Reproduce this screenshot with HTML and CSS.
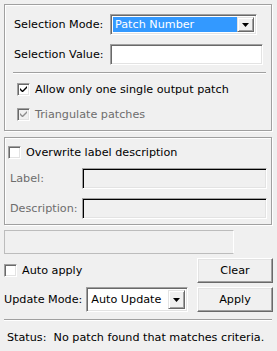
FILE: index.html
```html
<!DOCTYPE html>
<html lang="en">
<head>
    <meta charset="UTF-8">
    <title>Patch selection</title>
    <link rel="stylesheet" href="styles.css">
</head>
<body>

<div class="panel">
    <div class="group group-select">
        <div class="field-row">
            <span class="field-label">Selection Mode:</span>
            <div class="combo combo-mode">
                <span class="combo-text highlighted">Patch Number</span>
                <span class="combo-btn"><svg width="7" height="4" viewBox="0 0 7 4"><path d="M0 0H7L3.5 4Z" fill="#000"/></svg></span>
            </div>
        </div>
        <div class="field-row">
            <span class="field-label">Selection Value:</span>
            <div class="edit edit-value"></div>
        </div>
        <div class="sep sep-inner"></div>
        <div class="check-row row-single">
            <span class="check checked"><svg width="7" height="7" viewBox="0 0 7 7"><path d="M0 2V4L2 6H3L7 2V0L2.5 4.5Z" fill="#000"/></svg></span>
            <span>Allow only one single output patch</span>
        </div>
        <div class="check-row row-triangulate disabled">
            <span class="check checked"><svg width="7" height="7" viewBox="0 0 7 7"><path d="M0 2V4L2 6H3L7 2V0L2.5 4.5Z" fill="#8d8d8d"/></svg></span>
            <span>Triangulate patches</span>
        </div>
    </div>

    <div class="group group-label">
        <div class="check-row row-overwrite">
            <span class="check"></span>
            <span>Overwrite label description</span>
        </div>
        <div class="field-row row-label disabled">
            <span class="field-label short">Label:</span>
            <div class="edit edit-off"></div>
        </div>
        <div class="field-row row-desc disabled">
            <span class="field-label short">Description:</span>
            <div class="edit edit-off"></div>
        </div>
    </div>

    <div class="progress"></div>

    <div class="action-row row-auto">
        <div class="check-row">
            <span class="check"></span>
            <span>Auto apply</span>
        </div>
        <div class="button">Clear</div>
    </div>
    <div class="action-row row-update">
        <div class="update-field">
            <span>Update Mode:</span>
            <div class="combo combo-update">
                <span class="combo-text">Auto Update</span>
                <span class="combo-btn"><svg width="7" height="4" viewBox="0 0 7 4"><path d="M0 0H7L3.5 4Z" fill="#000"/></svg></span>
            </div>
        </div>
        <div class="button">Apply</div>
    </div>

    <div class="sep sep-status"></div>
    <div class="status">Status:&nbsp; No patch found that matches criteria.</div>
</div>

</body>
</html>
```
FILE: styles.css
```css
body {
    margin: 0;
    padding: 4px;
    background: #f0f0f0;
    font-family: "DejaVu Sans", sans-serif;
    font-size: 11.2px;
    color: #000;
}
.panel {
    width: 268px;
    display: flex;
    flex-direction: column;
}
.group {
    border: 1px solid #a0a0a0;
    box-shadow: inset 1px 1px 0 #fff, 1px 1px 0 #fff;
    display: flex;
    flex-direction: column;
}
.group-select {
    height: 127px;
    box-sizing: border-box;
    padding: 9px 0 0 9px;
}
.group-label {
    margin-top: 6px;
    height: 88px;
    box-sizing: border-box;
    padding: 8px 0 0 5px;
}
.field-row {
    display: flex;
    align-items: center;
}
.field-label {
    width: 96px;
}
.field-label.short {
    width: 72px;
}
.group-select .field-row + .field-row {
    margin-top: 9px;
}
.disabled {
    color: #6d6d6d;
}

/* sunken edit boxes */
.edit {
    box-sizing: border-box;
    height: 21px;
    background: #fff;
    border-top: 1px solid #a0a0a0;
    border-left: 1px solid #a0a0a0;
    border-right: 1px solid #fff;
    border-bottom: 1px solid #fff;
    box-shadow: inset 1px 1px 0 #696969, inset -1px -1px 0 #e3e3e3;
}
.edit-value {
    width: 153px;
}
.edit-off {
    width: 185px;
    background: #f0f0f0;
    box-shadow: inset 1px 1px 0 #000, inset -1px -1px 0 #e3e3e3;
}
.row-label {
    margin-top: 9px;
}
.row-desc {
    margin-top: 9px;
}

/* combo boxes */
.combo {
    box-sizing: border-box;
    display: flex;
    align-items: stretch;
    background: #fff;
    border-top: 1px solid #a0a0a0;
    border-left: 1px solid #a0a0a0;
    border-right: 1px solid #fff;
    border-bottom: 1px solid #fff;
    box-shadow: inset 1px 1px 0 #696969, inset -1px -1px 0 #e3e3e3;
    padding: 2px;
}
.combo-mode {
    width: 147px;
    height: 21px;
}
.combo-update {
    width: 102px;
    height: 25px;
    margin-left: 4px;
}
.combo-text {
    flex: 1;
    display: flex;
    align-items: center;
    padding-left: 2px;
}
.combo-text.highlighted {
    background: #3399ff;
    color: #fff;
}
.combo-btn {
    width: 17px;
    box-sizing: border-box;
    display: flex;
    align-items: center;
    justify-content: center;
    background: #f0f0f0;
    border-top: 1px solid #e3e3e3;
    border-left: 1px solid #e3e3e3;
    border-right: 1px solid #696969;
    border-bottom: 1px solid #696969;
    box-shadow: inset 1px 1px 0 #fff, inset -1px -1px 0 #a0a0a0;
}

.sep {
    height: 1px;
    background: #a0a0a0;
    box-shadow: 0 1px 0 #fff;
}
.sep-inner {
    width: 253px;
    margin: 7px 0 0 -1px;
}

/* check boxes */
.check-row {
    display: flex;
    align-items: center;
    height: 13px;
}
.check {
    box-sizing: border-box;
    width: 13px;
    height: 13px;
    margin-right: 5px;
    background: #fff;
    border-top: 1px solid #a0a0a0;
    border-left: 1px solid #a0a0a0;
    border-right: 1px solid #fff;
    border-bottom: 1px solid #fff;
    box-shadow: inset 1px 1px 0 #696969, inset -1px -1px 0 #e3e3e3;
    display: flex;
    align-items: center;
    justify-content: center;
}
.check-row.disabled .check {
    background: #f0f0f0;
}
.row-single {
    margin: 10px 0 0 3px;
}
.row-triangulate {
    margin: 12px 0 0 3px;
}
.row-overwrite {
    margin-left: -2px;
}

.progress {
    margin-top: 5px;
    width: 230px;
    height: 24px;
    box-sizing: border-box;
    border: 1px solid #bcbcbc;
    border-right-color: #fff;
}

.action-row {
    display: flex;
    align-items: center;
    justify-content: space-between;
    height: 25px;
    width: 269px;
}
.row-auto {
    margin-top: 4px;
}
.row-update {
    margin-top: 4px;
}
.update-field {
    display: flex;
    align-items: center;
}
.button {
    box-sizing: border-box;
    width: 76px;
    height: 25px;
    display: flex;
    align-items: center;
    justify-content: center;
    background: #f0f0f0;
    border-top: 1px solid #fff;
    border-left: 1px solid #fff;
    border-right: 1px solid #696969;
    border-bottom: 1px solid #696969;
    box-shadow: inset -1px -1px 0 #a0a0a0, inset 1px 1px 0 #e3e3e3;
}

.sep-status {
    margin-top: 7px;
    width: 268px;
}
.status {
    margin-top: 11px;
    padding-left: 3px;
}
```
